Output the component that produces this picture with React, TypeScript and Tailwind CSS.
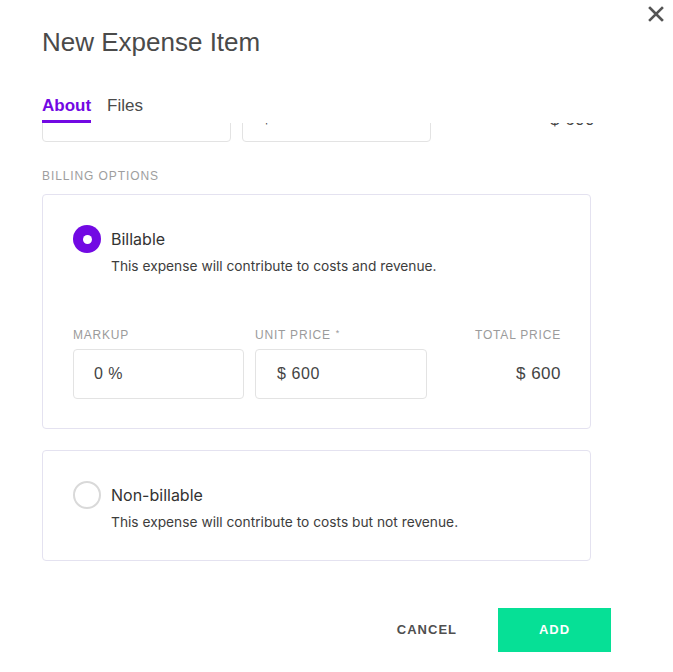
import React from "react";

const PURPLE = "#7209e3";

function CloseIcon() {
  return (
    <svg width="16" height="16" viewBox="0 0 16 16" fill="none">
      <path d="M2 2 L14 14 M14 2 L2 14" stroke="#555555" strokeWidth="2.6" strokeLinecap="square" />
    </svg>
  );
}

function Radio({ checked }: { checked: boolean }) {
  return (
    <div className="w-[28px] h-[28px] flex items-center justify-center shrink-0">
      {checked ? (
        <div className="w-[28px] h-[28px] rounded-full bg-[#7209e3] flex items-center justify-center">
          <div className="w-[9px] h-[9px] rounded-full bg-white" />
        </div>
      ) : (
        <div className="w-[28px] h-[28px] rounded-full border-2 border-[#d9d9d9] bg-white" />
      )}
    </div>
  );
}

function OptionHeader({ checked, title, text }: { checked: boolean; title: string; text: string }) {
  return (
    <div className="flex items-start gap-[10px]">
      <Radio checked={checked} />
      <div className="flex flex-col font-['Inter',sans-serif]">
        <div className="text-[16px] leading-[28px] text-[#333333]">{title}</div>
        <div className="mt-[3px] text-[13.75px] leading-[20px] text-[#3d3d3d]">{text}</div>
      </div>
    </div>
  );
}

export default function App() {
  return (
    <div className="relative w-full h-[672px] bg-white overflow-hidden font-['Liberation_Sans',Arial,sans-serif]">
      <button className="absolute right-[9px] top-[6px] w-[16px] h-[16px] flex items-center justify-center">
        <CloseIcon />
      </button>

      <div className="pt-[26px] pl-[42px]">
        <h1 className="text-[26px] leading-[32px] text-[#4a4a4a]">New Expense Item</h1>

        <div className="mt-[36px] flex gap-[16px]">
          <div className="flex flex-col">
            <span className="text-[17px] leading-[24px] font-bold" style={{ color: PURPLE }}>
              About
            </span>
            <div className="mt-[2px] h-[3px] bg-[#7209e3]" />
          </div>
          <div className="flex flex-col">
            <span className="text-[17px] leading-[24px] text-[#4a4a4a]">Files</span>
          </div>
        </div>
      </div>

      {/* scrolled form body */}
      <div className="h-[457px] overflow-hidden px-[42px]">
        <div className="-mt-[30px] flex items-start w-[553px]">
          <div className="w-[189px] h-[49px] rounded-[4px] border border-[#e3e3e3]" />
          <div className="ml-[11px] w-[189px] h-[49px] rounded-[4px] border border-[#e3e3e3] flex items-center pl-[19px] text-[16px] leading-[20px] text-[#444444]">
            $ 600
          </div>
          <div className="flex-1 h-[49px] flex items-center justify-end">
            <span className="mt-[5px] text-[17px] leading-[20px] tracking-[0.5px] text-[#444444]">$ 600</span>
          </div>
        </div>

        <div className="mt-[26px] text-[12px] leading-[16px] tracking-[0.9px] text-[#9e9e9e]">
          BILLING OPTIONS
        </div>

        <div className="mt-[10px] w-[549px] rounded-[4px] border border-[#e4e2f0] pt-[30px] pb-[29px] pl-[30px] pr-[29px]">
          <OptionHeader
            checked
            title="Billable"
            text="This expense will contribute to costs and revenue."
          />

          <div className="mt-[51px] grid grid-cols-[171px_172px_1fr] gap-x-[11px]">
            <div className="text-[12px] leading-[16px] tracking-[0.8px] text-[#9b9b9b]">MARKUP</div>
            <div className="text-[12px] leading-[16px] tracking-[0.8px] text-[#9b9b9b] flex">
              UNIT PRICE<span className="ml-[5px] text-[9px] leading-[12px] text-[#9b9b9b]">*</span>
            </div>
            <div className="text-[12px] leading-[16px] tracking-[0.8px] text-[#9b9b9b] text-right">TOTAL PRICE</div>

            <div className="mt-[6px] h-[50px] rounded-[4px] border border-[#e3e3e3] flex items-center pl-[20px] text-[16px] tracking-[0.5px] text-[#444444]">
              0 %
            </div>
            <div className="mt-[6px] h-[50px] rounded-[4px] border border-[#e3e3e3] flex items-center pl-[21px] text-[16px] tracking-[0.6px] text-[#444444]">
              $ 600
            </div>
            <div className="mt-[6px] h-[50px] flex items-center justify-end text-[17px] tracking-[0.5px] text-[#444444]">
              $ 600
            </div>
          </div>
        </div>

        <div className="mt-[21px] w-[549px] rounded-[4px] border border-[#e4e2f0] pt-[30px] pb-[28px] pl-[30px] pr-[29px]">
          <OptionHeader
            checked={false}
            title="Non-billable"
            text="This expense will contribute to costs but not revenue."
          />
        </div>
      </div>

      <div className="pt-[28px] pr-[62px] flex justify-end items-center gap-[41px]">
        <button className="h-[44px] text-[13px] font-bold tracking-[1px] text-[#4f4f4f]">CANCEL</button>
        <button className="w-[113px] h-[44px] bg-[#06e096] text-white text-[13px] font-bold tracking-[1px]">
          ADD
        </button>
      </div>
    </div>
  );
}
